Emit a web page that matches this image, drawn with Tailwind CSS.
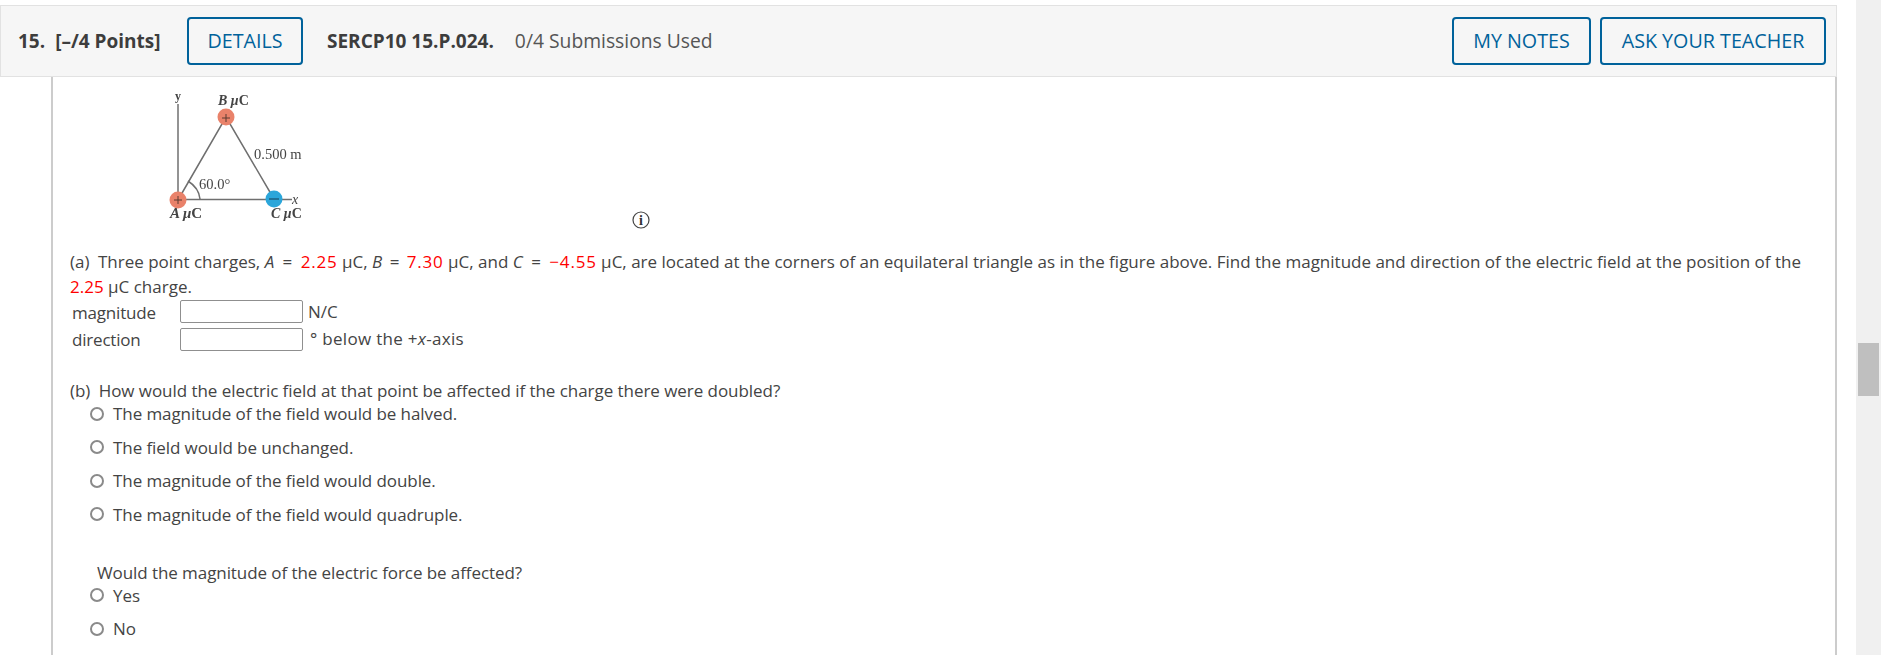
<!DOCTYPE html>
<html lang="en">
<head>
    <meta charset="UTF-8">
    <meta name="viewport" content="width=device-width, initial-scale=1.0">
    <title>SERCP10 15.P.024</title>
    <script src="https://cdn.jsdelivr.net/npm/@tailwindcss/browser@4"></script>
</head>
<body class="h-[655px] overflow-hidden bg-white font-['Open_Sans',sans-serif] text-[#444444]">
    <div class="flex">
        <div class="w-[1856px] pt-[5px]">
            <div class="w-[1837px]">
                <!-- Question header -->
                <div class="flex h-[72px] items-center border border-[#e2e2e2] bg-[#f6f6f6] pl-[17px] pr-[10px]">
                    <span class="w-[169px] text-[19px] font-bold text-[#3d3d3d]">15.<span class="ml-[10px]">[–/4 Points]</span></span>
                    <button class="h-[48px] w-[116px] rounded-[4px] border-2 border-[#00629b] text-[19.7px] font-medium text-[#00629b]">DETAILS</button>
                    <span class="ml-[24px] text-[19px] font-bold text-[#3d3d3d]">SERCP10 15.P.024.</span>
                    <span class="ml-[21px] text-[19.3px] text-[#555555]">0/4 Submissions Used</span>
                    <button class="ml-auto h-[48px] w-[139px] rounded-[4px] border-2 border-[#00629b] text-[19.7px] font-medium text-[#00629b]">MY NOTES</button>
                    <button class="ml-[9px] h-[48px] w-[226px] rounded-[4px] border-2 border-[#00629b] text-[19.7px] font-medium text-[#00629b]">ASK YOUR TEACHER</button>
                </div>

                <!-- Question body -->
                <div class="ml-[51px] h-[578px] border-x-2 border-[#cccccc] pl-[17px] text-[17px] leading-[25px]">
                    <div class="relative h-[160px]">
                        <svg class="absolute left-[80px] top-[3px] blur-[0.3px]" width="200" height="150" viewBox="150 80 200 150">
                            <g stroke="#6f6f6f" stroke-width="1.5" fill="none">
                                <path d="M178 104V200"/>
                                <path d="M178 200L226 117L274 199"/>
                                <path d="M178 199.500H292"/>
                                <path d="M188 181Q199 188 200 199"/>
                            </g>
                            <circle cx="178" cy="200" r="8.500" fill="#e9826a"/>
                            <circle cx="226" cy="117" r="8.500" fill="#e9826a"/>
                            <circle cx="274" cy="199" r="8.500" fill="#2ba6da"/>
                            <path d="M174 200H182M178 196V204M222 118H230M226 114V122" stroke="#5a3a30" stroke-width="1"/>
                            <path d="M269 199H279" stroke="#1d5f80" stroke-width="1.500"/>
                            <g font-family="Liberation Serif, serif" font-size="14" fill="#444444">
                                <text x="175" y="100" font-size="12" font-weight="bold">y</text>
                                <text x="218" y="105" font-weight="bold"><tspan font-style="italic">B μ</tspan>C</text>
                                <text x="254" y="159" font-size="14.500">0.500 m</text>
                                <text x="199" y="189" font-size="14.500">60.0°</text>
                                <text x="292" y="204" font-style="italic">x</text>
                                <text x="170" y="218" font-size="15" font-weight="bold"><tspan font-style="italic">A μ</tspan>C</text>
                                <text x="271" y="218" font-weight="bold"><tspan font-style="italic">C μ</tspan>C</text>
                            </g>
                        </svg>
                        <svg class="absolute left-[561px] top-[133px]" width="20" height="20" viewBox="0 0 20 20">
                            <circle cx="10" cy="10" r="8" fill="none" stroke="#444444" stroke-width="1.200"/>
                            <text x="10" y="15" text-anchor="middle" font-family="Liberation Serif, serif" font-size="14" font-weight="bold" fill="#333333">i</text>
                        </svg>
                    </div>

                    <!-- Part a -->
                    <p class="mt-[12px] w-[1745px]"><span class="mr-[4px]">(a)</span> Three point charges, <i>A</i> <span class="mx-[4px]">=</span> <span class="tracking-[0.8px] text-[#ff0000]">2.25</span> μC, <i>B</i> <span class="mx-[3px]">=</span> <span class="tracking-[0.8px] text-[#ff0000]">7.30</span> μC, and <i>C</i> <span class="mx-[4px]">=</span> <span class="tracking-[0.8px] text-[#ff0000]">−4.55</span> μC, are located at the corners of an equilateral triangle as in the figure above. Find the magnitude and direction of the electric field at the position of the <span class="text-[#ff0000]">2.25</span> μC charge.</p>
                    <div class="ml-[2px] mt-[1px] grid grid-cols-[108px_auto_1fr] items-center gap-y-[5px]">
                        <span class="pt-[2px] leading-[21px] tracking-[-0.2px]">magnitude</span>
                        <input type="text" class="h-[23px] w-[123px] rounded-[2px] border border-[#8f8f8f] bg-white">
                        <span class="ml-[5px] leading-[23px]">N/C</span>
                        <span class="leading-[23px] tracking-[-0.2px]">direction</span>
                        <input type="text" class="h-[23px] w-[123px] rounded-[2px] border border-[#8f8f8f] bg-white">
                        <span class="ml-[7px] pb-[2px] leading-[21px] tracking-[0.3px]">° below the +<i>x</i>-axis</span>
                    </div>

                    <!-- Part b -->
                    <p class="mt-[27px] tracking-[-0.05px]"><span class="mr-[4px]">(b)</span> How would the electric field at that point be affected if the charge there were doubled?</p>
                    <div class="-mt-[2px] ml-[20px] flex flex-col gap-[8.500px] tracking-[-0.08px]">
                        <label class="flex h-[25px] items-center gap-[9px]"><span class="size-[14px] rounded-full border-2 border-[#8a8a8a]"></span>The magnitude of the field would be halved.</label>
                        <label class="flex h-[25px] items-center gap-[9px]"><span class="size-[14px] rounded-full border-2 border-[#8a8a8a]"></span>The field would be unchanged.</label>
                        <label class="flex h-[25px] items-center gap-[9px]"><span class="size-[14px] rounded-full border-2 border-[#8a8a8a]"></span>The magnitude of the field would double.</label>
                        <label class="flex h-[25px] items-center gap-[9px]"><span class="size-[14px] rounded-full border-2 border-[#8a8a8a]"></span>The magnitude of the field would quadruple.</label>
                    </div>

                    <p class="ml-[27px] mt-[33px] tracking-[-0.08px]">Would the magnitude of the electric force be affected?</p>
                    <div class="-mt-[2px] ml-[20px] flex flex-col gap-[8.500px]">
                        <label class="flex h-[25px] items-center gap-[9px]"><span class="size-[14px] rounded-full border-2 border-[#8a8a8a]"></span>Yes</label>
                        <label class="flex h-[25px] items-center gap-[9px]"><span class="size-[14px] rounded-full border-2 border-[#8a8a8a]"></span>No</label>
                    </div>
                </div>
            </div>
        </div>

        <!-- Scrollbar -->
        <div class="h-[655px] w-[25px] bg-[#f0f0f0] pl-[2px] pt-[343px]">
            <div class="h-[53px] w-[21px] bg-[#bfbfbf]"></div>
        </div>
    </div>
</body>
</html>
